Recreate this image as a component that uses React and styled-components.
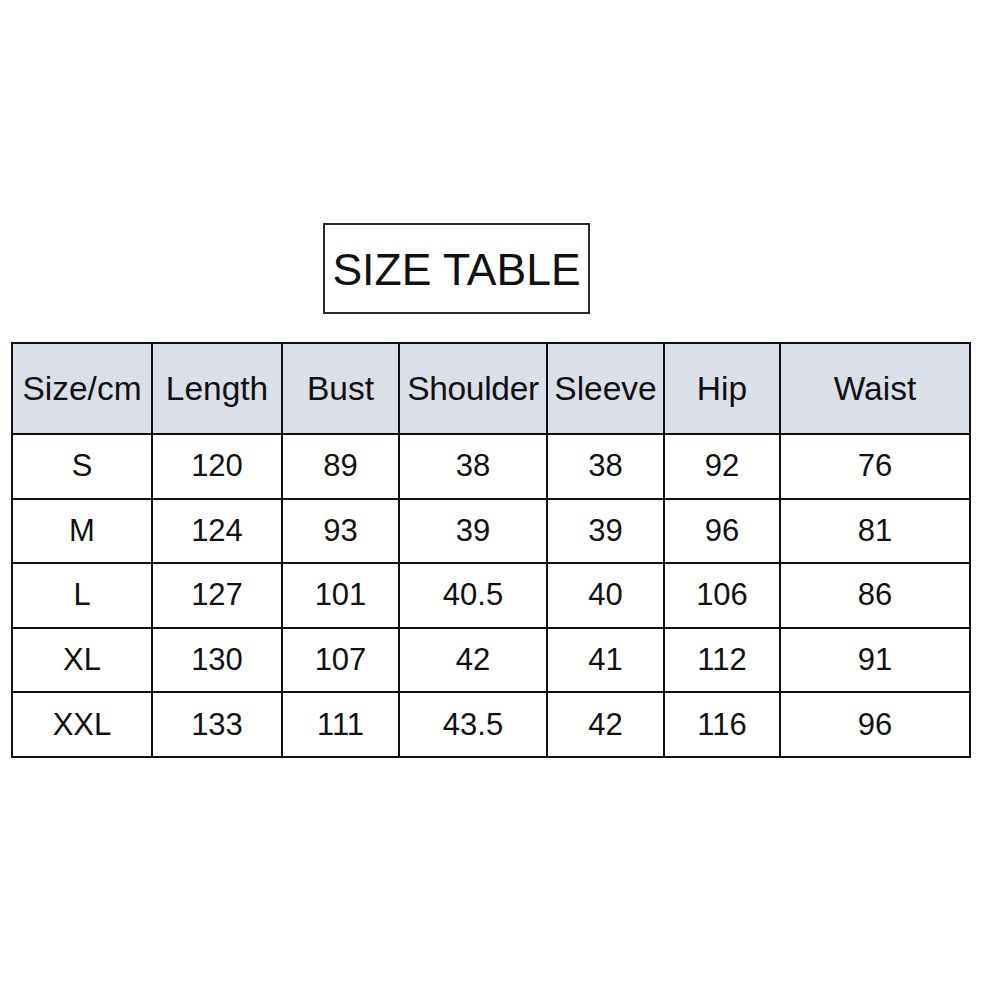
import React from "react";
import styled, { createGlobalStyle } from "styled-components";

const Global = createGlobalStyle`
  html, body { margin: 0; padding: 0; background: #ffffff; }
  body { font-family: "Liberation Sans", Arial, sans-serif; color: #111; }
`;

const Page = styled.div`
  width: 981px;
  height: 981px;
  box-sizing: border-box;
  padding-top: 223px;
  padding-left: 11px;
  display: flex;
  flex-direction: column;
  align-items: flex-start;
`;

const TitleBox = styled.div`
  margin-left: 312px;
  width: 267px;
  height: 91px;
  box-sizing: border-box;
  border: 2px solid #2a2a2a;
  display: flex;
  align-items: center;
  justify-content: center;
  font-size: 44.5px;
  color: #111;
  padding-top: 2px;
`;

const Table = styled.table`
  margin-top: 28px;
  border-collapse: collapse;
  table-layout: fixed;
  width: 958px;
  border: 2px solid #111;
`;

const Th = styled.th`
  height: 89px;
  padding: 0;
  font-weight: normal;
  font-size: 33.5px;
  background: #dbe0e8;
  border: 2px solid #111;
  text-align: center;
  color: #111;
  white-space: nowrap;
  letter-spacing: ${(p) => (p.$tight ? "-0.3px" : "0")};
`;

const Td = styled.td`
  height: 62.6px;
  padding: 0;
  font-size: 31px;
  border: 2px solid #111;
  text-align: center;
  color: #111;
`;

const widths = [140, 130, 117, 148, 117, 116, 190];
const headers = ["Size/cm", "Length", "Bust", "Shoulder", "Sleeve", "Hip", "Waist"];
const rows = [
  ["S", "120", "89", "38", "38", "92", "76"],
  ["M", "124", "93", "39", "39", "96", "81"],
  ["L", "127", "101", "40.5", "40", "106", "86"],
  ["XL", "130", "107", "42", "41", "112", "91"],
  ["XXL", "133", "111", "43.5", "42", "116", "96"],
];

export default function App() {
  return (
    <>
      <Global />
      <Page>
        <TitleBox>SIZE TABLE</TitleBox>
        <Table>
          <colgroup>
            {widths.map((w, i) => (
              <col key={i} style={{ width: w }} />
            ))}
          </colgroup>
          <thead>
            <tr>
              {headers.map((h, i) => (
                <Th key={h} $tight={i === 3}>
                  {h}
                </Th>
              ))}
            </tr>
          </thead>
          <tbody>
            {rows.map((r) => (
              <tr key={r[0]}>
                {r.map((c, i) => (
                  <Td key={i}>{c}</Td>
                ))}
              </tr>
            ))}
          </tbody>
        </Table>
      </Page>
    </>
  );
}
